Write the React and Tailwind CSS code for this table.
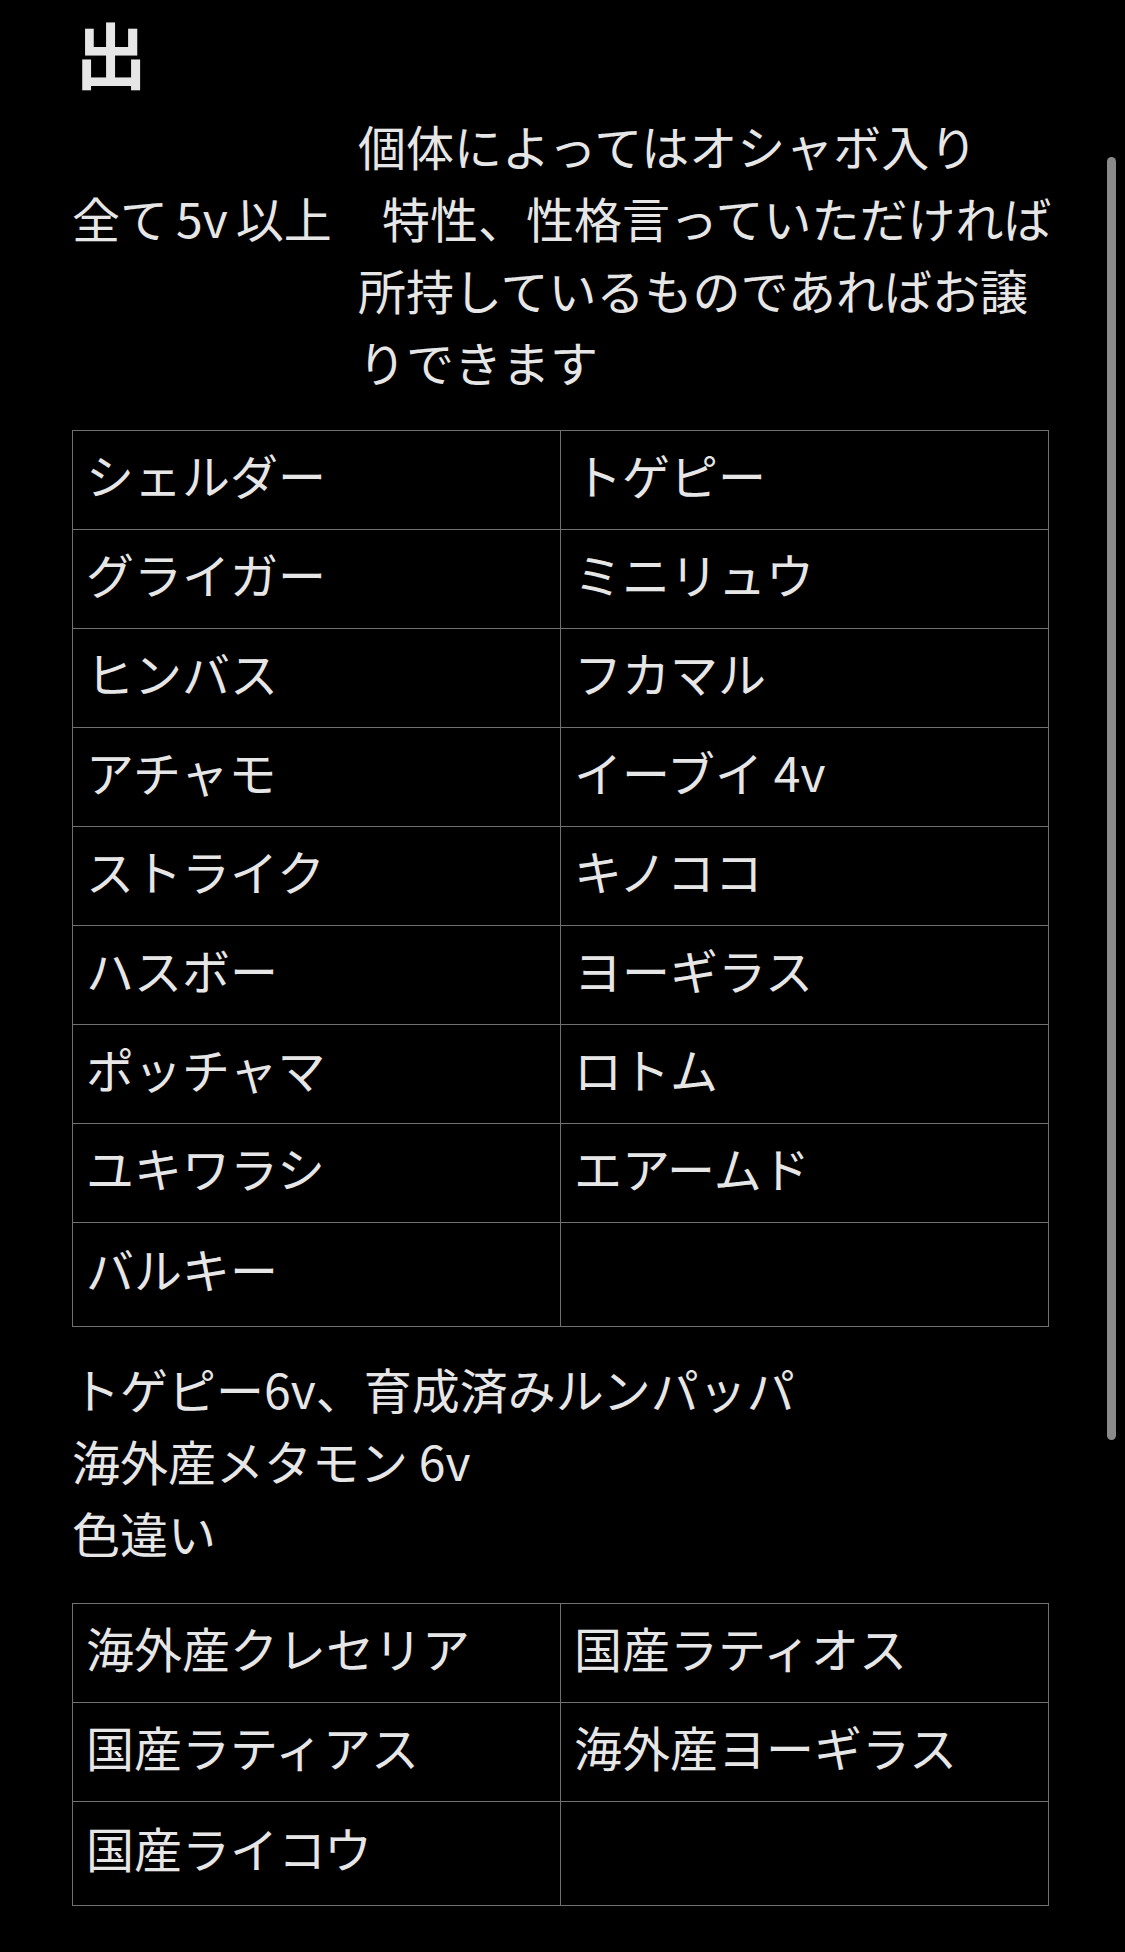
import React from 'react'

const font = { fontFamily: '"Noto Sans CJK JP", "Noto Sans", sans-serif' }

const table1 = [
  ['シェルダー', 'トゲピー'],
  ['グライガー', 'ミニリュウ'],
  ['ヒンバス', 'フカマル'],
  ['アチャモ', 'イーブイ 4v'],
  ['ストライク', 'キノココ'],
  ['ハスボー', 'ヨーギラス'],
  ['ポッチャマ', 'ロトム'],
  ['ユキワラシ', 'エアームド'],
  ['バルキー', ''],
]

const table2 = [
  ['海外産クレセリア', '国産ラティオス'],
  ['国産ラティアス', '海外産ヨーギラス'],
  ['国産ライコウ', ''],
]

function Grid({ rows }) {
  return (
    <div className="grid w-[977px] grid-cols-2 border-l border-t border-[#707070]">
      {rows.map((row, i) => {
        const last = i === rows.length - 1
        return row.map((cell, j) => (
          <div
            key={`${i}-${j}`}
            className={`flex items-center whitespace-nowrap border-b border-r border-[#707070] pl-[13px] pb-[13px] ${last ? 'h-[104px]' : 'h-[99px]'}`}
          >
            {cell}
          </div>
        ))
      })}
    </div>
  )
}

export default function App() {
  return (
    <div
      className="relative min-h-[1952px] w-[1125px] overflow-hidden bg-black pl-[72px] text-[48px] leading-[72px] text-[#e6e6e6]"
      style={font}
    >
      <h2 className="pl-[3px] text-[72px] font-bold leading-[104px] text-[#e6e6e6]">出</h2>

      <div className="mt-[5px] flex">
        <div className="w-[286px] pt-[72px] whitespace-nowrap">
          全て<span className="mx-[8px]">5v</span>以上
        </div>
        <div className="whitespace-nowrap">
          個体によってはオシャボ入り
          <br />
          {'\u2002'}特性、性格言っていただければ
          <br />
          所持しているものであればお譲
          <br />
          りできます
        </div>
      </div>

      <div className="mt-[33px]">
        <Grid rows={table1} />
      </div>

      <div className="mt-[25px] whitespace-nowrap">
        <div>トゲピー6v、育成済みルンパッパ</div>
        <div>海外産メタモン 6v</div>
        <div>色違い</div>
      </div>

      <div className="mt-[35px]">
        <Grid rows={table2} />
      </div>

      <div className="absolute left-[1107px] top-[157px] h-[1283px] w-[9px] rounded-full bg-[#8a8a8a]" />
    </div>
  )
}
